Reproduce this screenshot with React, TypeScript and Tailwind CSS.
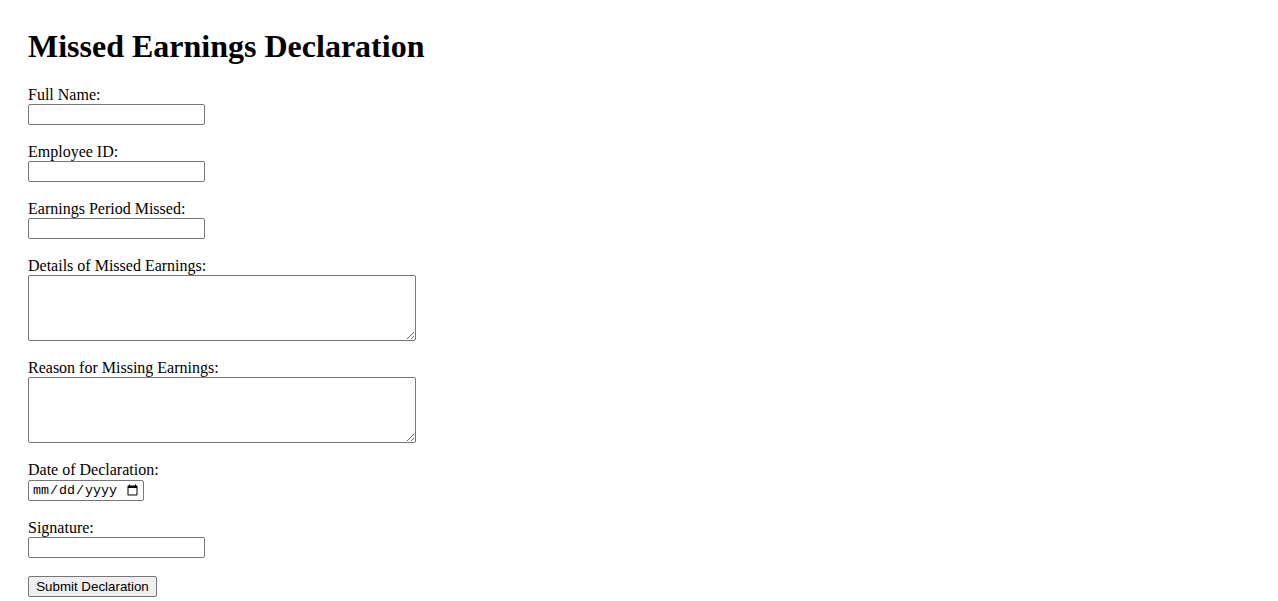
import React from "react";

const inputCls =
  "block w-[177px] h-[21px] border border-[#767676] rounded-[2px] bg-white px-[2px] text-[13.33px] font-['Liberation_Sans',Arial,sans-serif] leading-[normal]";
const areaCls =
  "block w-[388px] h-[66px] border border-[#767676] rounded-[2px] bg-white px-[2px] text-[13.33px] font-['Liberation_Mono',monospace] leading-[normal]";

function Field({ label, children }: { label: string; children: React.ReactNode }) {
  return (
    <div className="mb-[18px] flex flex-col items-start">
      <label className="block">{label}</label>
      {children}
    </div>
  );
}

export default function App() {
  return (
    <div className="min-h-screen bg-white pl-[28px] pt-[28px] font-['Liberation_Serif','Times_New_Roman',serif] text-[16px] leading-[normal] text-black">
      <h1 className="mb-[21px] text-[32px] font-bold leading-[normal]">Missed Earnings Declaration</h1>
      <form className="flex flex-col items-start" onSubmit={(e) => e.preventDefault()}>
        <Field label="Full Name:">
          <input type="text" className={inputCls} />
        </Field>
        <Field label="Employee ID:">
          <input type="text" className={inputCls} />
        </Field>
        <Field label="Earnings Period Missed:">
          <input type="text" className={inputCls} />
        </Field>
        <Field label="Details of Missed Earnings:">
          <textarea className={areaCls} />
        </Field>
        <Field label="Reason for Missing Earnings:">
          <textarea className={areaCls} />
        </Field>
        <Field label="Date of Declaration:">
          <input
            type="date"
            className="mt-[1px] block w-[116px] h-[21px] border border-[#767676] rounded-[2px] bg-white pl-[3px] pr-[2px] text-[13.33px] font-['Liberation_Mono',monospace] leading-[normal]"
          />
        </Field>
        <Field label="Signature:">
          <input type="text" className={inputCls} />
        </Field>
        <button
          type="submit"
          className="h-[21px] w-[129px] rounded-[2px] border border-[#767676] bg-[#efefef] px-[6px] text-[13.33px] font-['Liberation_Sans',Arial,sans-serif] leading-[normal] text-black"
        >
          Submit Declaration
        </button>
      </form>
    </div>
  );
}
